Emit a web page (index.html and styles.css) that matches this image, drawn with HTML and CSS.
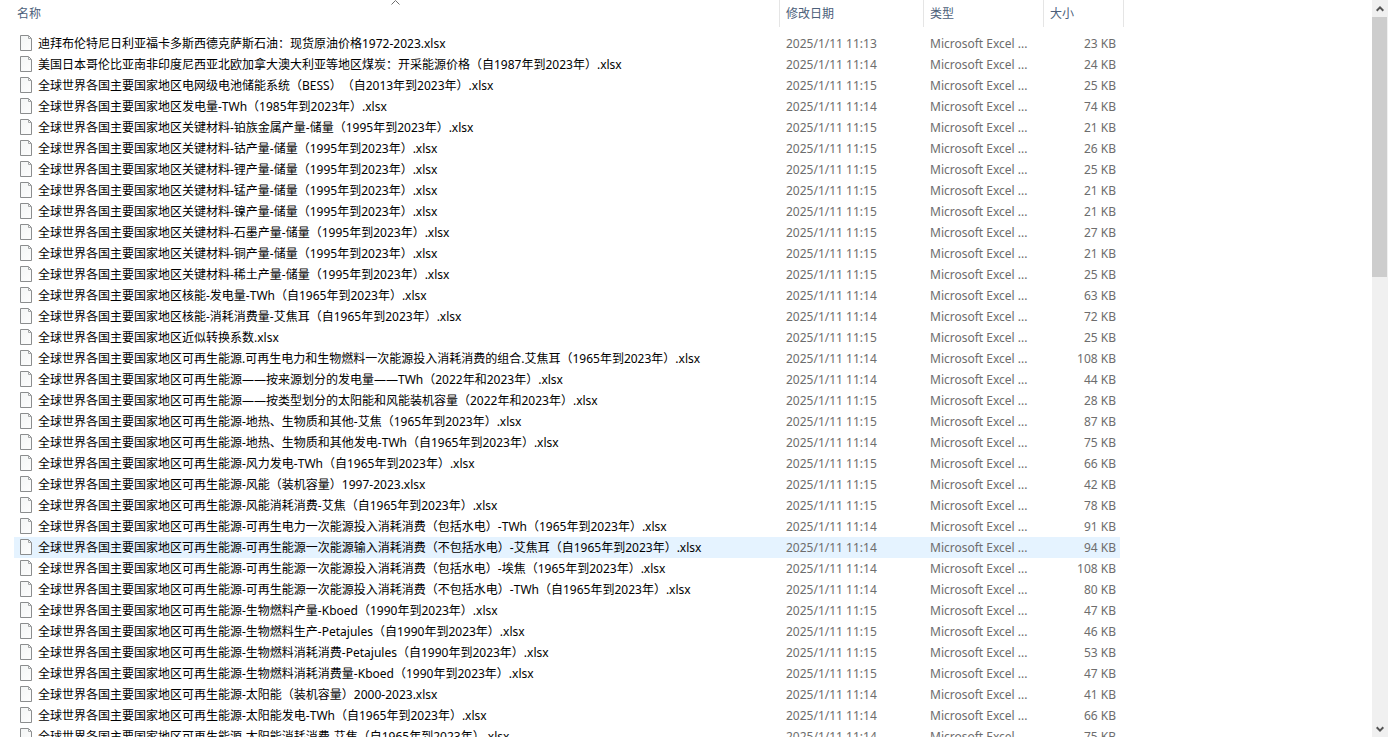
FILE: index.html
```html
<!DOCTYPE html>
<html lang="zh-CN">
<head>
<meta charset="utf-8">
<title>文件列表</title>
<link rel="stylesheet" href="styles.css">
</head>
<body>
<svg class="sprite" aria-hidden="true">
  <defs>
    <linearGradient id="paper" x1="0" y1="0" x2="1" y2="1">
      <stop offset="0" stop-color="#f3f5f5"/>
      <stop offset="1" stop-color="#fdfdfd"/>
    </linearGradient>
    <symbol id="file" viewBox="0 0 12 16">
      <path d="M.5 .5H8.500L11.500 3.500V15.500H.5Z" fill="url(#paper)" stroke="#8b8d8e"/>
      <path d="M8.500 1V3.500H11" fill="none" stroke="#a4a6a7"/>
    </symbol>
  </defs>
</svg>
<div class="explorer">
  <main class="pane">
    <table class="files">
      <colgroup><col class="col-name"><col class="col-date"><col class="col-type"><col class="col-size"></colgroup>
      <thead>
        <tr>
          <th scope="col" aria-sort="ascending"><button class="head head-name" type="button">名称<svg class="sort" viewBox="0 0 9 5" aria-hidden="true"><path d="M.5 4.500L4.500 .5L8.500 4.500" fill="none" stroke="#6d6d6d"/></svg></button></th>
          <th scope="col"><button class="head" type="button">修改日期</button></th>
          <th scope="col"><button class="head" type="button">类型</button></th>
          <th scope="col"><button class="head" type="button">大小</button></th>
        </tr>
      </thead>
      <tbody id="rows"></tbody>
    </table>
  </main>
  <div class="scrollbar">
    <button class="arrow" type="button" aria-label="向上滚动"><svg viewBox="0 0 8 6" aria-hidden="true"><path d="M.7 4.700L4 1.400L7.300 4.700" fill="none" stroke="#555" stroke-width="2"/></svg></button>
    <div class="track"><div class="thumb"></div></div>
    <button class="arrow" type="button" aria-label="向下滚动"><svg viewBox="0 0 8 6" aria-hidden="true"><path d="M.7 1.300L4 4.600L7.300 1.300" fill="none" stroke="#555" stroke-width="2"/></svg></button>
  </div>
</div>
<script src="files.js"></script>
</body>
</html>
```

FILE: styles.css
```css
* {
  box-sizing: border-box;
}

body {
  margin: 0;
  background: #fff;
  color: #000;
  font: 12px/21px "Noto Sans", "Noto Sans CJK SC", sans-serif;
  text-spacing-trim: space-all;
}

.sprite {
  position: absolute;
  width: 0;
  height: 0;
}

.explorer {
  display: flex;
  height: 100vh;
  overflow: hidden;
}

.pane {
  flex: 1;
  min-width: 0;
  overflow: hidden;
  padding-left: 14px;
}

.files {
  width: 1110px;
  table-layout: fixed;
  border-collapse: separate;
  border-spacing: 0;
}

.col-name { width: 766px; }
.col-date { width: 144px; }
.col-type { width: 120px; }
.col-size { width: 80px; }

th {
  padding: 0 0 6px;
  font-weight: 400;
}

.head {
  display: block;
  position: relative;
  width: 100%;
  height: 27px;
  padding: 0 6px;
  border: 0;
  border-right: 1px solid #e5e5e5;
  background: none;
  color: #4c607a;
  font: inherit;
  text-align: left;
}

.head-name {
  padding-left: 3px;
}

.sort {
  position: absolute;
  top: 0;
  left: calc(50% - 6px);
  width: 9px;
  height: 5px;
}

td {
  height: 21px;
  padding: 0 6px;
  color: #6d6d6d;
  white-space: nowrap;
  overflow: hidden;
  text-overflow: ellipsis;
}

.name {
  color: #000;
}

.name-line {
  display: flex;
  gap: 6px;
  height: 21px;
}

.file-icon {
  width: 12px;
  height: 16px;
  margin-top: 2px;
}

.size {
  padding-right: 4px;
  border-right: 4px solid transparent;
  background-clip: padding-box;
  text-align: right;
}

.hover td {
  background-color: #e5f3ff;
}

.scrollbar {
  display: flex;
  flex-direction: column;
  width: 16px;
  background: #f0f0f0;
}

.arrow {
  display: flex;
  align-items: center;
  justify-content: center;
  height: 17px;
  padding: 0;
  border: 0;
  background: none;
}

.arrow svg {
  width: 8px;
  height: 6px;
}

.track {
  flex: 1;
}

.thumb {
  width: 15px;
  height: 37%;
  background: #cdcdcd;
}
```

FILE: files.js
```js
const base = "全球世界各国主要国家地区";
const files = [
  ["迪拜布伦特尼日利亚福卡多斯西德克萨斯石油：现货原油价格1972-2023", 13, 23],
  ["美国日本哥伦比亚南非印度尼西亚北欧加拿大澳大利亚等地区煤炭：开采能源价格（自1987年到2023年）", 14, 24],
  [base + "电网级电池储能系统（BESS）（自2013年到2023年）", 15, 25],
  [base + "发电量-TWh（1985年到2023年）", 14, 74],
  [base + "关键材料-铂族金属产量-储量（1995年到2023年）", 15, 21],
  [base + "关键材料-钴产量-储量（1995年到2023年）", 15, 26],
  [base + "关键材料-锂产量-储量（1995年到2023年）", 15, 25],
  [base + "关键材料-锰产量-储量（1995年到2023年）", 15, 21],
  [base + "关键材料-镍产量-储量（1995年到2023年）", 15, 21],
  [base + "关键材料-石墨产量-储量（1995年到2023年）", 15, 27],
  [base + "关键材料-铜产量-储量（1995年到2023年）", 15, 21],
  [base + "关键材料-稀土产量-储量（1995年到2023年）", 15, 25],
  [base + "核能-发电量-TWh（自1965年到2023年）", 14, 63],
  [base + "核能-消耗消费量-艾焦耳（自1965年到2023年）", 14, 72],
  [base + "近似转换系数", 15, 25],
  [base + "可再生能源.可再生电力和生物燃料一次能源投入消耗消费的组合.艾焦耳（1965年到2023年）", 14, 108],
  [base + "可再生能源——按来源划分的发电量——TWh（2022年和2023年）", 14, 44],
  [base + "可再生能源——按类型划分的太阳能和风能装机容量（2022年和2023年）", 15, 28],
  [base + "可再生能源-地热、生物质和其他-艾焦（1965年到2023年）", 15, 87],
  [base + "可再生能源-地热、生物质和其他发电-TWh（自1965年到2023年）", 14, 75],
  [base + "可再生能源-风力发电-TWh（自1965年到2023年）", 15, 66],
  [base + "可再生能源-风能（装机容量）1997-2023", 15, 42],
  [base + "可再生能源-风能消耗消费-艾焦（自1965年到2023年）", 15, 78],
  [base + "可再生能源-可再生电力一次能源投入消耗消费（包括水电）-TWh（1965年到2023年）", 14, 91],
  [base + "可再生能源-可再生能源一次能源输入消耗消费（不包括水电）-艾焦耳（自1965年到2023年）", 14, 94, true],
  [base + "可再生能源-可再生能源一次能源投入消耗消费（包括水电）-埃焦（1965年到2023年）", 14, 108],
  [base + "可再生能源-可再生能源一次能源投入消耗消费（不包括水电）-TWh（自1965年到2023年）", 14, 80],
  [base + "可再生能源-生物燃料产量-Kboed（1990年到2023年）", 15, 47],
  [base + "可再生能源-生物燃料生产-Petajules（自1990年到2023年）", 15, 46],
  [base + "可再生能源-生物燃料消耗消费-Petajules（自1990年到2023年）", 15, 53],
  [base + "可再生能源-生物燃料消耗消费量-Kboed（1990年到2023年）", 15, 47],
  [base + "可再生能源-太阳能（装机容量）2000-2023", 14, 41],
  [base + "可再生能源-太阳能发电-TWh（自1965年到2023年）", 14, 66],
  [base + "可再生能源-太阳能消耗消费-艾焦（自1965年到2023年）", 14, 75]
];

document.getElementById("rows").innerHTML = files.map(([name, minute, size, hover]) => `
  <tr${hover ? ' class="hover"' : ""}>
    <td class="name"><div class="name-line"><svg class="file-icon" aria-hidden="true"><use href="#file"/></svg><span>${name}.xlsx</span></div></td>
    <td>2025/1/11 11:${minute}</td>
    <td>Microsoft Excel ...</td>
    <td class="size">${size} KB</td>
  </tr>`).join("");
```
